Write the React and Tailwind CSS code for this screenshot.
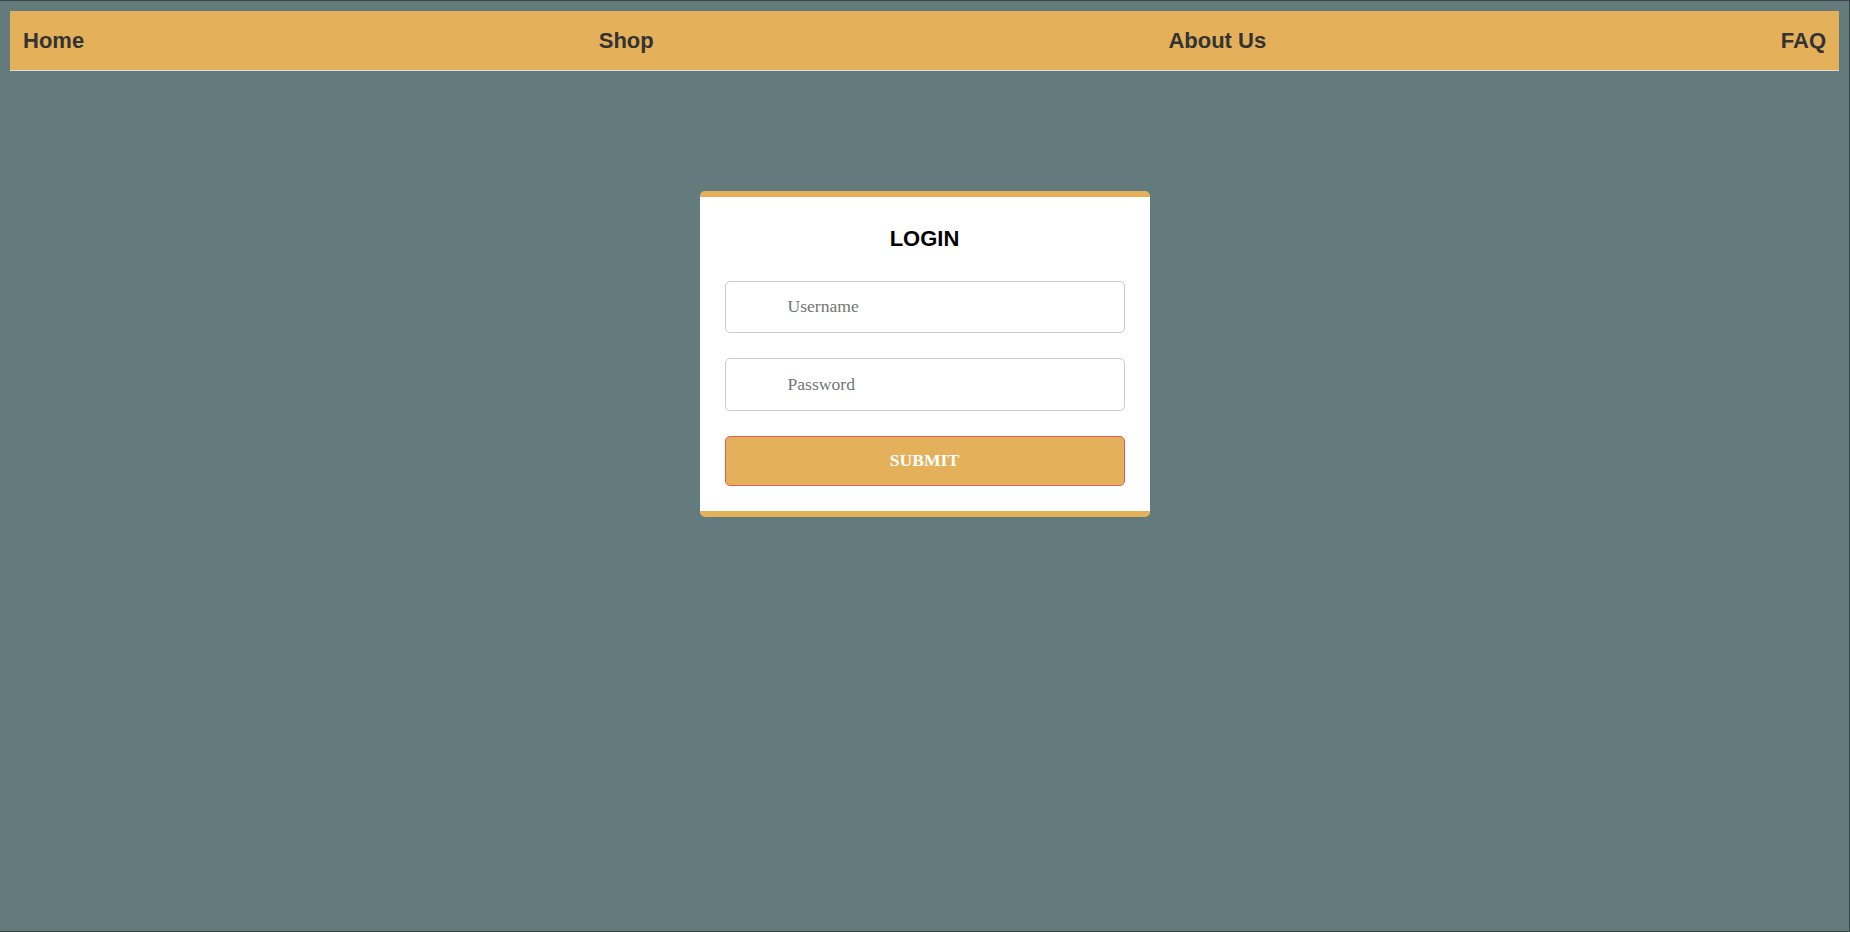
import React from "react";

export default function App() {
  return (
    <div className="min-h-[932px] w-full bg-[#647b7e] border-t border-r border-b border-[#3b4547] px-[10px] pt-[10px] box-border">
      <nav className="h-[60px] bg-[#e4b15a] border-b border-[#dcdcdc] flex items-center justify-between px-[13px] font-['Liberation_Sans',Arial,sans-serif] font-bold text-[22px] text-[#333333]">
        <a href="#">Home</a>
        <a href="#">Shop</a>
        <a href="#">About Us</a>
        <a href="#">FAQ</a>
      </nav>
      <div className="flex justify-center mt-[120px]">
        <div className="w-[450px] bg-white rounded-[5px] border-t-[6px] border-b-[6px] border-[#e4b15a] px-[25px] pt-[29px] pb-[25px] box-border">
          <h2 className="text-center font-['Liberation_Sans',Arial,sans-serif] font-bold text-[22px] leading-[25px] text-black mb-[30px]">
            LOGIN
          </h2>
          <input
            type="text"
            placeholder="Username"
            className="block w-[400px] h-[52px] border border-[#cccccc] rounded-[5px] pl-[62px] pb-[1px] font-['Liberation_Serif','Times_New_Roman',serif] text-[17.6px] text-[#333] placeholder:text-[#757575] outline-none box-border"
          />
          <input
            type="password"
            placeholder="Password"
            className="block w-[400px] h-[53px] mt-[25px] border border-[#cccccc] rounded-[5px] pl-[62px] font-['Liberation_Serif','Times_New_Roman',serif] text-[17.6px] text-[#333] placeholder:text-[#757575] outline-none box-border"
          />
          <button
            type="button"
            className="block w-[400px] h-[50px] mt-[25px] bg-[#e4b15a] border border-[#e05d5d] rounded-[5px] text-white font-['Liberation_Serif','Times_New_Roman',serif] font-bold text-[17.6px] pb-[1px] box-border"
          >
            SUBMIT
          </button>
        </div>
      </div>
    </div>
  );
}
